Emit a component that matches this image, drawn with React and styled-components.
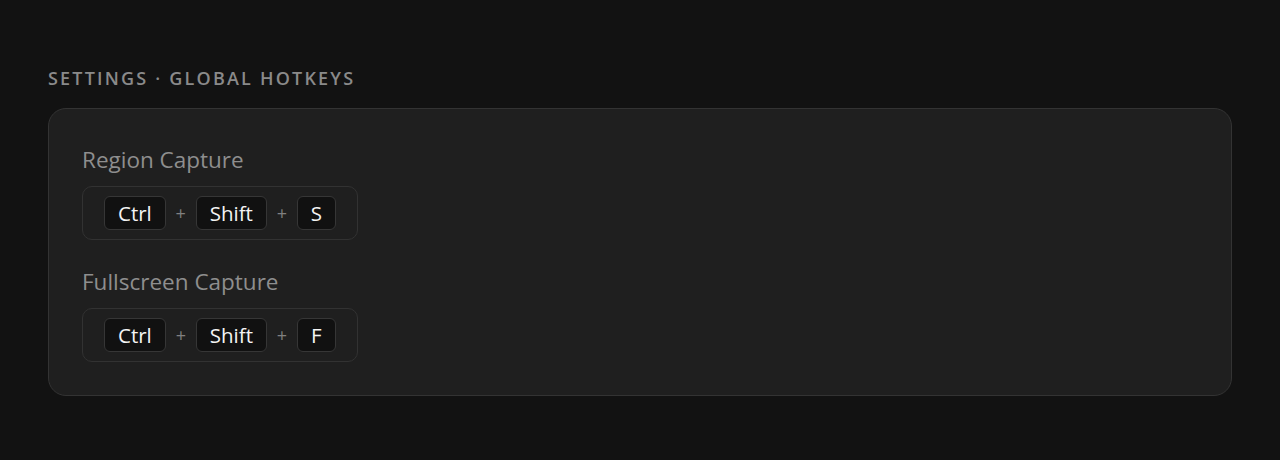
import React from 'react';
import styled, { createGlobalStyle } from 'styled-components';

const GlobalStyle = createGlobalStyle`
  html, body {
    margin: 0;
    padding: 0;
    background: #121212;
    font-family: "Open Sans", "Noto Sans", "Liberation Sans", sans-serif;
  }
`;

const Page = styled.div`
  width: 1280px;
  height: 460px;
  box-sizing: border-box;
  padding: 66px 48px 0;
  background: #121212;
`;

const Heading = styled.h2`
  margin: 0 0 18px;
  font-size: 18px;
  line-height: 24px;
  font-weight: 600;
  letter-spacing: 2.2px;
  text-transform: uppercase;
  color: #8a8a8a;
`;

const Card = styled.section`
  box-sizing: border-box;
  height: 288px;
  padding: 37px 33px 33px;
  background: #1f1f1f;
  border: 1px solid #333333;
  border-radius: 18px;
  display: flex;
  flex-direction: column;
  gap: 28px;
`;

const Field = styled.div`
  display: flex;
  flex-direction: column;
  align-items: flex-start;
  gap: 12px;
`;

const Label = styled.div`
  font-size: 22.5px;
  line-height: 28px;
  color: #8e8e8e;
`;

const Combo = styled.div`
  box-sizing: border-box;
  width: 276px;
  height: 54px;
  padding: 0 21px;
  display: flex;
  align-items: center;
  gap: 8px;
  background: #1f1f1f;
  border: 1px solid #323232;
  border-radius: 10px;
`;

const Key = styled.kbd`
  box-sizing: border-box;
  height: 34px;
  padding: 0 13px;
  display: inline-flex;
  align-items: center;
  font-family: inherit;
  font-size: 20.5px;
  color: #f4f4f4;
  background: #111111;
  border: 1px solid #363636;
  border-radius: 6px;
`;

const Plus = styled.span`
  font-size: 18px;
  color: #808080;
  width: 14px;
  text-align: center;
`;

const hotkeys = [
  { label: 'Region Capture', keys: ['Ctrl', 'Shift', 'S'] },
  { label: 'Fullscreen Capture', keys: ['Ctrl', 'Shift', 'F'] },
];

const App = () => (
  <Page>
    <GlobalStyle />
    <Heading>Settings · Global Hotkeys</Heading>
    <Card>
      {hotkeys.map((h) => (
        <Field key={h.label}>
          <Label>{h.label}</Label>
          <Combo>
            {h.keys.map((k, i) => (
              <React.Fragment key={k}>
                {i > 0 && <Plus>+</Plus>}
                <Key>{k}</Key>
              </React.Fragment>
            ))}
          </Combo>
        </Field>
      ))}
    </Card>
  </Page>
);

export default App;
